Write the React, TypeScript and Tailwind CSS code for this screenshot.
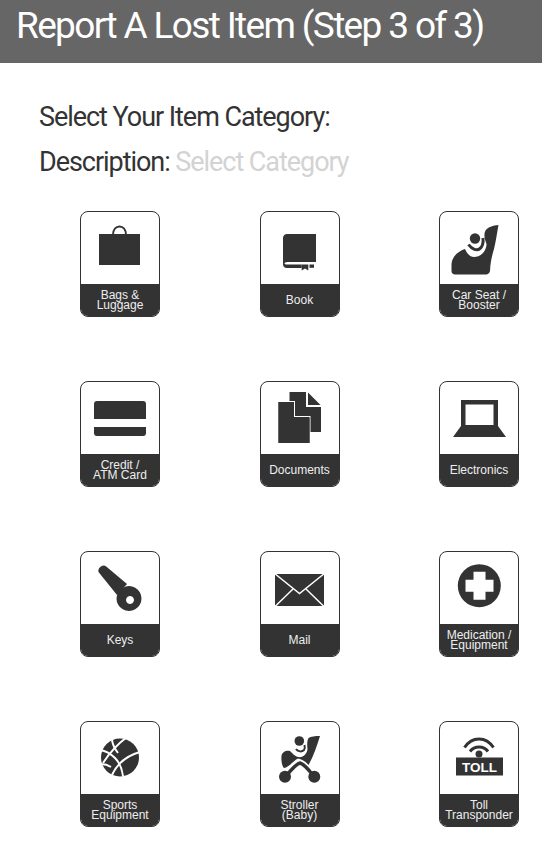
const categories = [
  { label: ["Bags &", "Luggage"], icon: <BagIcon /> },
  { label: ["Book"], icon: <BookIcon /> },
  { label: ["Car Seat /", "Booster"], icon: <CarSeatIcon /> },
  { label: ["Credit /", "ATM Card"], icon: <CardIcon /> },
  { label: ["Documents"], icon: <DocumentsIcon /> },
  { label: ["Electronics"], icon: <LaptopIcon /> },
  { label: ["Keys"], icon: <KeyIcon /> },
  { label: ["Mail"], icon: <MailIcon /> },
  { label: ["Medication /", "Equipment"], icon: <MedicalIcon /> },
  { label: ["Sports", "Equipment"], icon: <BallIcon /> },
  { label: ["Stroller", "(Baby)"], icon: <StrollerIcon /> },
  { label: ["Toll", "Transponder"], icon: <TollIcon /> },
];

function Svg({ children }: { children: React.ReactNode }) {
  return (
    <svg width="78" height="72" viewBox="1 1 78 72" fill="#333333" className="block">
      {children}
    </svg>
  );
}

function BagIcon() {
  return (
    <Svg>
      <rect x="19" y="23" width="41" height="31" />
      <path d="M33 24c0-5.500 3-8.500 6.500-8.500s6.500 3 6.500 8.500" fill="none" stroke="#333333" strokeWidth="2" />
    </Svg>
  );
}

function BookIcon() {
  return (
    <Svg>
      <path d="M27 23H56V51H27.500C25.500 51 24 52 23 54V27C23 24.500 25 23 27 23Z" />
      <path d="M23 53c0 2.500 1.500 4 4 4H41.700V53.500H27c-1.500 0-2.500-.5-2.500-1.500z" />
      <path d="M41.700 53.500H48.300V59.500L45 57.500 41.700 59.500z" />
      <rect x="49.500" y="53.500" width="4.500" height="3.300" />
    </Svg>
  );
}

function CarSeatIcon() {
  return (
    <Svg>
      <path d="M59.500 14C54 14.500 49 16 46.500 19.500 44.500 23 45.500 28 47.500 33 47.500 40 42 46 35 46 31 46 28 42.500 26 38 20 40 13 45 12.500 53V60C12.500 62 14 63.500 16 63.500H47C49 63.500 50.500 62 51 60 51.500 50 53 45 55 38 57 30 58 22 59.500 14Z" />
      <circle cx="36" cy="27.500" r="5.200" />
      <path d="M29.500 33.500C33 38.500 38 40 41 37.500 43.500 35.500 44.500 32 44 27" fill="none" stroke="#333333" strokeWidth="3" />
    </Svg>
  );
}

function CardIcon() {
  return (
    <Svg>
      <path d="M17 20h46a3 3 0 0 1 3 3v15H14V23a3 3 0 0 1 3-3z" />
      <path d="M14 46h52v6a3 3 0 0 1-3 3H17a3 3 0 0 1-3-3z" />
    </Svg>
  );
}

function DocumentsIcon() {
  return (
    <Svg>
      <path d="M29.500 11H46v15h15v25H29.500z" />
      <path d="M48 11.500 60.500 24H48z" />
      <path d="M18.500 21H34v15h15.500v26h-31z" stroke="#ffffff" strokeWidth="2" paintOrder="stroke" />
      <path d="M18.500 21H33.500v15.500h16V62h-31z" />
      <path d="M35.500 20.500 49.500 34.500" stroke="#333333" strokeWidth="2" />
    </Svg>
  );
}

function LaptopIcon() {
  return (
    <Svg>
      <path d="M22 19h37v27h-37z M26.500 23.500V44h28V23.500z" fillRule="evenodd" />
      <path d="M22 45h37l8 11H14z" />
    </Svg>
  );
}

function KeyIcon() {
  return (
    <Svg>
      <path d="M18.500 21C17.500 18.500 20.500 14.500 23.500 14.500 24.500 14.500 25.500 15 26.500 15.700L47 33 37 44z" />
      <path
        d="M49 35a12.500 12.500 0 1 1-.01 0z M50 45a4 4 0 1 0 .01 0z"
        fillRule="evenodd"
      />
    </Svg>
  );
}

function MailIcon() {
  return (
    <Svg>
      <rect x="15" y="23" width="49" height="32" />
      <path d="M14 22 39.500 42.500 65 22" fill="none" stroke="#ffffff" strokeWidth="1.500" />
      <path d="M15 55.500 33 38M64 55.500 46 38" fill="none" stroke="#ffffff" strokeWidth="1.500" />
    </Svg>
  );
}

function MedicalIcon() {
  return (
    <Svg>
      <circle cx="40.300" cy="34.700" r="21.500" />
      <path
        d="M34.500 20.700h12v8h8v12h-8v8h-12v-8h-8v-12h8z"
        fill="#ffffff"
      />
    </Svg>
  );
}

function BallIcon() {
  return (
    <Svg>
      <circle cx="40" cy="36.500" r="19" />
      <g fill="none" stroke="#ffffff" strokeWidth="2">
        <path d="M47 16c-8 6-15 12-24 26" />
        <path d="M60 31c-11 3-22 10-28 23" />
        <path d="M20 29c6 1 11 4 15 8 4 4 7 10 8 18" />
        <path d="M32 18c0 6 3 10 6 14" />
        <path d="M21 43c3 0 7 1 10 3" />
      </g>
    </Svg>
  );
}

function StrollerIcon() {
  return (
    <Svg>
      <circle cx="25" cy="55.700" r="6" />
      <circle cx="54.300" cy="55.700" r="6" />
      <circle cx="39.300" cy="20" r="4.800" />
      <path d="M60 15C55 15 51 15.500 48.500 17 47 20 47 24 47.500 28 47 33 43 37 38 36 34 35 32 31.500 30 30 26 29 22 31 21.500 35 21 40 22 45 24 47 28 47 33 40 38 37.500 42 38 46 41 48.500 44 53 36 57 25 60 15Z" />
      <path d="M36 28C38 31 42 31 44 29 45 27.500 45 26 44.500 24" fill="none" stroke="#333333" strokeWidth="2" />
      <path d="M27 54C31 49 36 43 40 42 44 43 48 48 52 53" fill="none" stroke="#333333" strokeWidth="3.500" />
    </Svg>
  );
}

function TollIcon() {
  return (
    <Svg>
      <path d="M25.500 26.500C33 15 47 15 54.500 26.500" fill="none" stroke="#333333" strokeWidth="3" />
      <path d="M31 30.500c4.500-6 13.500-6 18 0" fill="none" stroke="#333333" strokeWidth="3" />
      <circle cx="40" cy="33" r="3.500" />
      <rect x="17" y="36.500" width="47" height="18" />
      <text
        x="40.500"
        y="51"
        textAnchor="middle"
        fill="#ffffff"
        fontSize="13.500"
        fontWeight="700"
        fontFamily="'Liberation Sans', Arial, sans-serif"
      >
        TOLL
      </text>
    </Svg>
  );
}

export default function App() {
  return (
    <div className="min-h-[848px] bg-white font-['Roboto',Arial,sans-serif]">
      {/* Header */}
      <div className="h-[63px] bg-[#666666] pl-4">
        <h1 className="text-[37px] leading-[52px] tracking-[-1.65px] text-white">
          Report A Lost Item (Step 3 of 3)
        </h1>
      </div>

      {/* Selection */}
      <div className="pl-[39px] pt-[37px] text-[27px] leading-[34px] tracking-[-1.05px] text-[#333333]">
        <p>Select Your Item Category:</p>
        <p className="mt-[11px]">
          Description: <span className="text-[#d3d3d3]">Select Category</span>
        </p>
      </div>

      {/* Category cards */}
      <div className="mt-[32px] grid grid-cols-[repeat(3,80px)] justify-between gap-y-[64px] pl-[80px] pr-[23px]">
        {categories.map((cat) => (
          <div
            key={cat.label.join(" ")}
            className="flex h-[106px] w-[80px] flex-col overflow-hidden rounded-[8px] border border-[#333333] bg-white"
          >
            {cat.icon}
            <div className="flex h-[32px] flex-col items-center justify-center bg-[#333333] pb-[1px] text-center font-['Liberation_Sans',Arial,sans-serif] text-[12px] leading-[10px] text-[#eeeeee]">
              {cat.label.map((line) => (
                <span key={line} className="block whitespace-nowrap">
                  {line}
                </span>
              ))}
            </div>
          </div>
        ))}
      </div>
    </div>
  );
}
